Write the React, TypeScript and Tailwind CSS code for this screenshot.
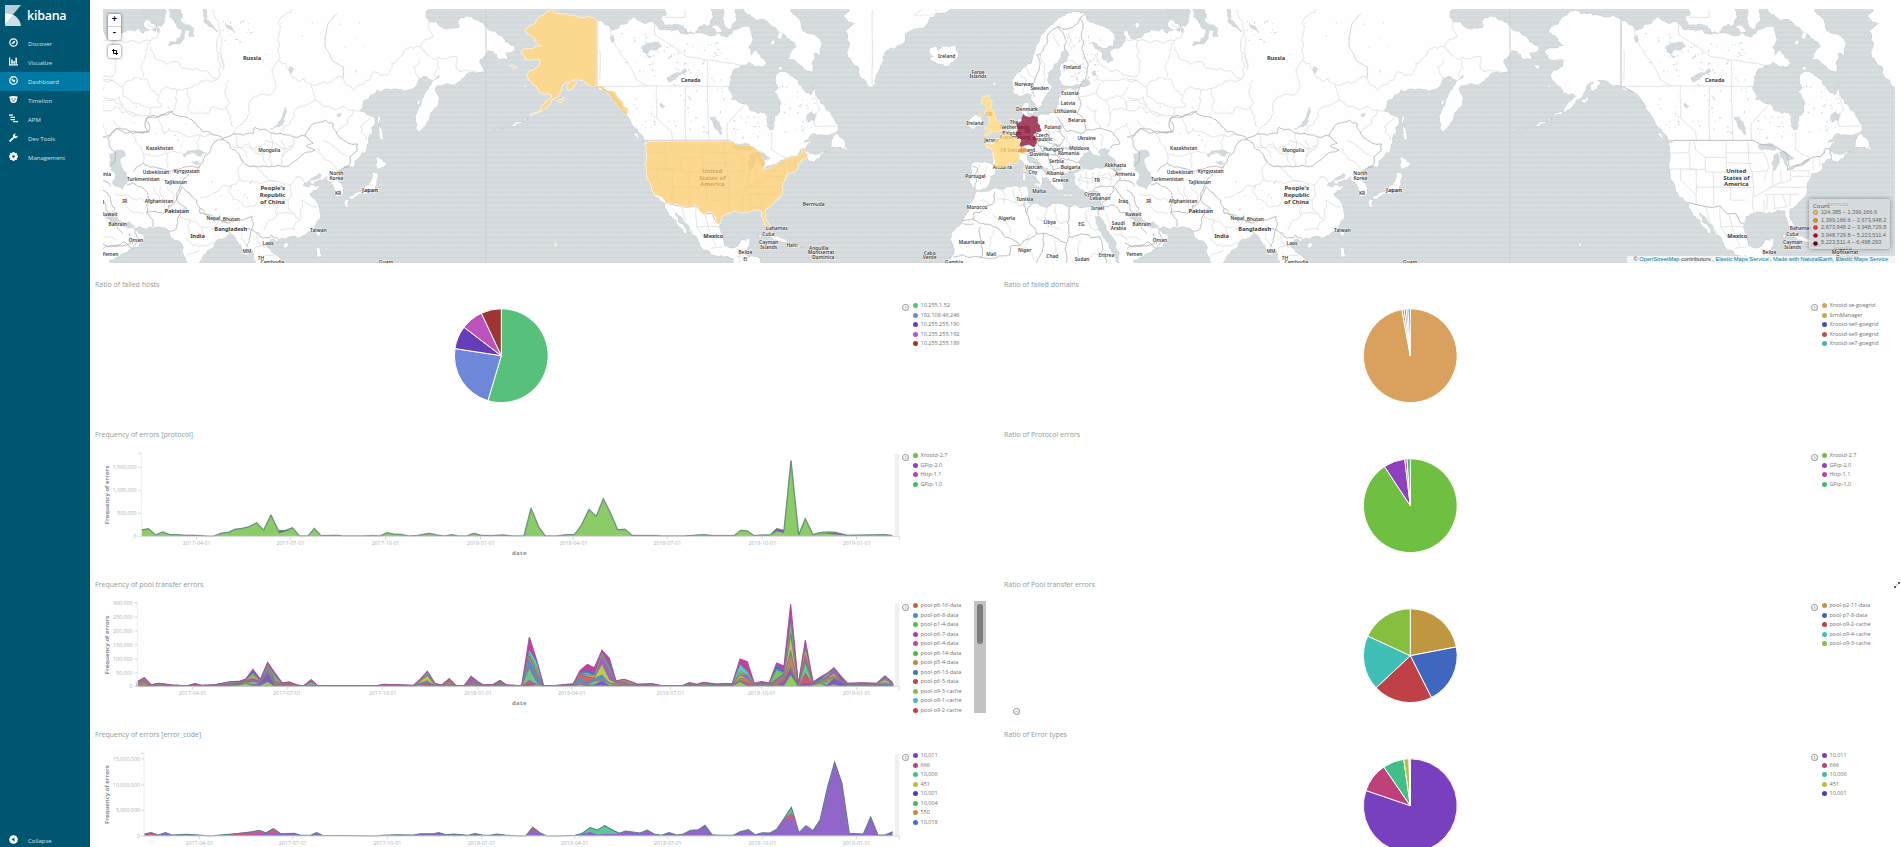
import React from "react";

type Pt = [number, number];

const parse = (s: string): Pt[] =>
  s.trim().split(/\s+/).map((p) => p.split(",").map(Number) as Pt);

const hash = (a: number, b: number) => {
  const v = Math.sin(a * 12.9898 + b * 78.233) * 43758.5453;
  return v - Math.floor(v);
};

// Midpoint displacement, symmetric in its end points so that shared borders coincide.
const split = (a: Pt, b: Pt, amp: number, depth: number): Pt[] => {
  const dx = b[0] - a[0];
  const dy = b[1] - a[1];
  const len = Math.hypot(dx, dy);
  if (depth === 0 || len < 5 || amp === 0) return [b];
  const sign = a[0] < b[0] || (a[0] === b[0] && a[1] < b[1]) ? 1 : -1;
  const k = (hash(a[0] + b[0], a[1] + b[1]) - 0.5) * 2 * amp * Math.min(len, 46) * sign;
  const m: Pt = [(a[0] + b[0]) / 2 - (dy / len) * k, (a[1] + b[1]) / 2 + (dx / len) * k];
  return [...split(a, m, amp, depth - 1), ...split(m, b, amp, depth - 1)];
};

const rough = (s: string, closed = true, amp = 0.2) => {
  const pts = parse(s);
  const out: Pt[] = [pts[0]];
  for (let i = 1; i < pts.length; i++) out.push(...split(pts[i - 1], pts[i], amp, 4));
  if (closed) out.push(...split(pts[pts.length - 1], pts[0], amp, 4));
  return "M" + out.map((p) => p[0].toFixed(1) + " " + p[1].toFixed(1)).join("L") + (closed ? "Z" : "");
};

/* ---------- geography: three sheets, each in its own triple-resolution grid ---------- */

const asiaLand = [
  "250,800 250,210 470,210 475,60 496,50 496,15 1280,15 1285,65 1310,65 1320,80 1378,82 1380,55 1425,60 1450,70 1485,95 1510,115 1525,130 1545,145 1535,155 1515,160 1522,178 1495,175 1480,155 1465,150 1455,165 1440,178 1452,213 1420,215 1385,235 1370,248 1315,255 1305,265 1315,290 1310,320 1290,345 1280,365 1260,395 1252,335 1265,300 1282,270 1316,235 1320,216 1294,240 1271,228 1253,246 1240,265 1215,275 1195,268 1130,270 1110,285 1080,330 1100,345 1120,350 1125,365 1115,400 1105,430 1075,475 1060,500 1040,497 1025,510 1010,520 1015,545 1027,560 1025,585 1010,590 1003,580 1002,560 995,545 980,540 985,525 965,540 945,545 940,552 930,550 935,540 965,525 960,520 945,528 930,540 915,548 905,555 925,562 940,555 960,560 950,570 930,580 940,595 955,615 960,640 950,665 935,690 915,705 890,712 860,715 840,715 830,725 820,715 805,725 800,740 820,760 838,775 850,800 775,800 760,775 757,750 740,765 725,760 725,735 710,715 690,700 670,715 645,725 620,755 605,775 595,800 565,800 555,770 548,735 535,720 515,715 510,700 505,692 480,680 455,682 420,680 402,683 405,690 430,705 430,720 415,740 385,750 350,770 309,788",
  "1135,350 1142,350 1145,390 1150,420 1142,418 1137,390 1133,365",
  "1132,470 1145,478 1160,490 1150,502 1135,508 1130,490",
  "1120,515 1132,520 1130,550 1118,570 1095,580 1070,588 1055,598 1045,592 1065,578 1090,570 1105,555 1115,540",
  "1035,598 1048,600 1044,622 1036,618",
  "955,690 960,695 955,708 948,700",
  "850,732 862,728 864,738 855,745",
  "950,742 962,745 965,768 950,770",
  "1250,310 1260,300 1260,330",
];
const euroLand = [
  "400,275 397,240 410,222 430,205 455,190 462,165 468,140 480,120 490,100 510,75 535,55 560,42 585,35 610,40 618,55 640,68 670,80 695,95 705,115 700,138 680,145 655,138 635,125 620,115 640,135 665,155 670,180 685,190 700,180 690,160 705,145 725,140 735,125 730,95 745,95 750,115 765,118 790,105 815,90 835,95 850,85 858,100 880,90 900,85 905,100 920,95 915,70 870,60 862,70 870,85 900,96 928,60 928,15 990,15 990,600 680,640 660,640 663,610 665,590 655,575 640,570 625,575 605,568 590,555 583,540 582,520 600,512 615,510 600,505 585,510 570,512 560,518 545,520 540,530 548,545 550,570 535,572 520,555 508,540 500,525 500,505 480,490 465,475 455,465 440,462 440,475 455,490 475,505 500,530 495,535 485,530 487,545 478,555 470,535 450,515 435,500 425,480 405,478 390,490 375,497 355,497 345,505 345,520 330,540 325,555 310,565 290,570 278,560 272,550 275,520 277,490 300,488 335,492 340,470 335,450 318,440 315,430 340,428 350,420 365,415 378,400 395,390 410,378 412,360 428,355 425,335 430,310 445,305 440,330 450,350 470,350 500,345 520,340 530,325 535,300 545,275 570,265 600,262 625,255 610,250 590,252 570,258 545,255 537,235 540,200 560,185 570,165 560,150 545,155 540,175 520,195 505,220 505,250 515,262 495,290 485,315 470,322 460,305 455,285 440,280 420,290",
  "290,575 320,575 350,565 400,560 440,560 445,575 438,600 455,612 485,620 500,625 520,610 545,612 570,620 610,625 645,620 660,635 700,630 760,800 200,800 215,770 212,715 225,690 250,660 265,625 280,600",
  "308,290 328,285 325,300 338,303 330,325 345,340 352,365 368,378 362,395 335,400 310,408 320,395 335,390 312,385 325,370 325,350 312,340 318,320 302,310",
  "272,356 290,345 303,350 300,375 280,386 266,376",
  "150,145 165,140 175,152 195,140 225,138 236,160 225,180 195,198 165,187 150,178 165,168 150,158",
  "462,555 483,552 480,566",
  "428,520 436,518 435,542 427,538",
  "430,500 436,498 437,514 431,514",
  "550,584 576,584 576,588 552,588",
  "618,586 635,581 632,590",
  "765,72 775,68 780,78 770,84",
  "340,250 348,246 344,260",
  "448,330 460,328 458,342 448,340",
  "510,300 514,292 514,306",
  "105,45 125,28 165,28 168,40 130,45",
];
const amerLand = [
  "340,75 360,50 375,38 395,30 430,42 470,48 495,52 515,52 531,64 555,75 575,92 600,75 625,65 640,52 650,60 690,65 725,90 755,95 775,90 800,105 830,100 870,110 895,100 905,110 925,110 945,90 970,80 990,85 998,115 985,140 992,180 975,195 950,205 930,230 925,265 935,300 960,310 985,320 1010,340 1035,340 1040,365 1050,390 1060,390 1065,350 1080,325 1080,300 1060,275 1075,260 1072,220 1100,218 1135,240 1145,260 1160,280 1175,285 1182,265 1190,290 1215,325 1235,350 1255,375 1255,390 1215,405 1180,400 1150,430 1175,425 1155,450 1185,465 1220,455 1200,475 1180,485 1165,480 1162,472 1135,490 1130,512 1105,520 1095,540 1085,560 1088,580 1065,605 1040,625 1035,640 1050,675 1045,685 1030,660 1025,635 1000,630 965,640 930,640 905,650 900,672 905,700 910,725 930,745 955,740 965,720 990,715 985,740 975,765 1000,770 1020,775 1020,800 950,800 940,775 905,765 870,755 840,735 830,710 810,690 790,660 770,640 758,620 770,650 785,672 800,695 795,700 778,680 755,650 735,610 705,588 695,560 680,530 675,490 678,440 672,430 690,423 660,400 640,380 625,350 605,320 575,285 560,272 531,258 505,255 480,240 465,240 455,245 435,250 425,270 415,290 395,300 385,320 355,335 330,345 365,320 385,300 395,290 385,280 360,280 350,260 325,240 320,225 330,210 355,200 360,180 340,178 315,178 303,157 325,145 345,140 365,138 345,125 330,105 315,95 320,82",
  "725,52 740,45 735,20 870,20 880,50 868,75 835,80 825,100 805,98 790,78 740,75 730,65",
  "875,80 895,75 905,92 890,98",
  "915,20 945,20 950,60 935,85 915,80 908,55",
  "970,20 1110,20 1140,65 1160,100 1205,130 1200,165 1182,160 1175,190 1178,215 1150,205 1125,180 1100,180 1112,160 1130,140 1080,95 1050,70 1010,60 980,40",
  "985,170 1005,150 1020,165 1040,190 1010,200 990,190",
  "1075,98 1088,100 1085,115 1072,112",
  "1055,122 1066,125 1062,135 1052,130",
  "1075,200 1088,200 1085,210 1075,208",
  "1235,430 1250,392 1258,412 1275,428 1282,450 1255,440 1230,440",
  "638,396 652,400 682,428 668,424",
  "1300,20 1440,20 1600,20 1545,45 1510,85 1455,100 1450,130 1400,150 1385,190 1365,240 1358,262 1340,250 1320,230 1300,190 1282,160 1290,130 1278,95 1305,70 1270,50",
  "1012,705 1050,700 1085,715 1105,728 1080,722 1050,708 1020,712",
  "1108,735 1130,732 1152,742 1120,745",
  "268,196 280,195 292,202 282,206",
  "412,302 430,290 432,298 420,308",
  "310,258 320,258 316,263",
  "205,388 230,383 228,386 208,391",
  "240,382 262,378 250,384",
  "275,376 300,366 325,358 305,368 280,378",
  "405,728 412,735 406,740",
  "440,256 460,240 470,248 455,268 442,272",
];
const asiaWater = [
  "510,15 540,15 548,45 540,60 560,75 583,85 582,112 566,108 568,90 556,90 552,115 540,132 508,138 505,132 530,125 543,108 546,92 530,80 520,60 508,50",
  "610,20 620,40 618,60 638,75 655,92 650,95 630,80 612,64",
  "330,462 350,450 372,452 376,468 358,478 364,500 380,520 382,548 370,566 350,560 338,545 345,520 330,495",
  "550,462 565,452 590,450 620,460 600,468 575,456 560,462 553,472",
  "810,388 830,376 848,350 855,322 858,340 852,365 838,380",
  "575,485 600,490 590,496",
  "318,640 332,640 355,658 378,668 388,665 405,680 380,682 360,676 340,665 325,655",
  "675,75 695,80 705,98 685,88",
  "868,200 880,205 872,222",
  "1010,345 1024,340 1020,350",
];
const euroWater = [
  "600,480 610,460 630,450 640,465 660,470 655,455 675,445 690,450 680,465 705,480 725,500 720,512 690,505 660,505 635,510 610,508 600,495",
  "645,650 655,648 672,670 692,705 708,735 718,760 725,800 710,800 700,760 680,725 665,700 652,675",
  "605,245 620,238 632,250 618,256",
  "636,215 646,212 648,225 640,228",
  "860,15 928,15 925,60 915,80 900,80 885,55 865,50",
];
const amerWater = [
  "665,140 680,130 715,125 725,140 710,150 690,150 680,165 695,170 685,172 672,158",
  "740,235 760,222 795,205 800,215 775,228 760,240 745,245",
  "870,350 885,350 895,365 905,385 905,405 895,390 885,385",
  "942,440 965,432 985,432 1005,446 990,450 965,446 950,450",
  "990,465 1002,460 1006,475 1000,500 988,512 984,490",
  "1005,455 1035,462 1050,475 1030,478 1030,500 1020,480 1008,470",
  "1030,508 1050,498 1075,490 1098,478 1090,488 1066,498",
  "1160,345 1175,335 1190,345 1185,362 1165,365",
  "570,112 580,105 585,120 575,128",
  "720,310 735,318 728,325",
];

const countryA = [
  "309,410 330,405 350,385 375,400 415,398 445,395 435,375 445,352 480,348 515,335 550,350 570,358 590,375 610,395 640,405 668,418 645,425 630,455 620,465 600,500 560,500 530,510 480,505 430,490 400,515",
  "668,418 700,402 730,405 760,400 765,382 800,390 830,402 880,410 915,408 940,430 920,440 945,450 915,458 880,485 850,500 800,500 745,498 720,470 690,440 668,418",
  "915,408 945,370 975,360 1000,370 1010,400 1040,425 1072,432 1070,455 1050,470 1045,500 1010,515",
  "600,500 560,530 540,560 570,580 590,600 600,625 640,650 680,668 720,660 755,648 760,670 755,690 790,715 815,705 835,715",
  "540,560 530,600 560,625 535,650 525,690 505,692",
  "380,555 400,550 440,575 445,600 440,640 460,660 460,680",
  "440,640 490,640 530,600 545,565",
  "600,625 600,640 650,662 680,668",
  "690,700 680,690 720,690 755,690 740,740",
  "370,725 400,745 415,725 405,690",
  "309,745 350,735 370,725",
  "309,570 330,590 345,625 330,640",
];
const provinceA = [
  "640,27 660,90 655,160 668,200", "655,160 650,240 600,245 560,265 530,270 500,260 475,285",
  "475,285 440,235 400,235 365,260 340,240 309,240", "309,120 450,122 480,95 470,80 440,70",
  "450,122 435,170 430,230", "450,140 465,175 530,185 560,205 590,205 625,215 650,240",
  "880,27 860,40 835,70 832,120 835,180 820,230 830,260 800,285 755,300 750,340 715,380 700,400",
  "685,240 675,270 680,320 690,345 700,380", "560,265 570,300 565,330 610,340 640,320 680,320",
  "530,270 525,320 515,335", "475,285 485,320 450,325 445,352", "365,260 370,290 400,310 450,325",
  "835,180 870,220 890,240 930,250", "930,250 945,300 900,320 870,370 835,400",
  "930,250 1030,230", "1030,230 1060,270 1080,255 1110,240 1125,215 1160,225 1175,190 1205,170 1220,145 1260,140",
  "945,300 975,320 1040,325 1060,330 1085,330", "1060,330 1045,370 1025,380 1010,400",
  "309,330 350,320 380,335 400,350 445,352", "309,290 340,300 365,330", "340,360 360,385",
  "480,348 490,400 545,400 590,405 640,405", "400,400 430,460 430,490", "430,460 500,460 560,462 620,465",
  "500,460 505,505", "600,405 590,450", "720,540 690,560 640,580 600,590", "720,470 715,520 720,540 770,545 830,545",
  "745,498 800,530 830,545 870,555 890,530 915,548", "870,555 865,600 880,640 900,660", "690,560 700,600 760,620 800,600 830,620 865,600",
  "830,620 815,660 790,690", "880,640 830,640", "900,660 880,690 840,690", "905,600 950,620", "905,600 900,660",
  "955,440 975,480 1010,500", "970,420 1040,470", "700,402 710,440 740,470", "785,440 790,480 800,500", "815,405 815,500", "845,420 845,495", "740,440 800,420 880,440",
  "540,650 570,660 600,680 640,690", "570,660 560,720 600,740 640,730", "560,770 600,750", "605,680 610,720", "660,640 640,690",
  "460,560 480,600 440,600", "480,560 490,620", "500,560 520,600 500,640", "510,520 560,510 600,515", "380,600 400,640 430,640", "345,580 400,600 440,600",
  "725,700 735,730 755,745", "770,700 790,740 815,740", "760,745 800,735", "775,760 830,765",
  "700,440 745,430 770,460 800,455", "880,410 870,450 845,470", "1110,350 1080,380 1100,420", "1260,240 1240,200 1260,180",
  "1260,140 1290,170 1310,175 1305,230", "1310,170 1370,170 1380,215 1440,222", "1285,65 1300,110 1260,140",
  "540,15 550,60", "665,110 670,210",
];
const riverA = ["1010,40 985,70 975,110 980,150 1000,185 1030,200 1030,230"];
const countryE = [
  "470,225 478,205 470,165 490,150 500,110 535,80 550,100 560,125 555,150",
  "535,80 555,88 580,80 600,55 612,45", "600,55 605,110 620,185 615,240 600,258", "465,290 462,260 470,225",
  "600,262 595,290 600,320 590,340 560,330 530,330", "590,340 610,355 620,390 600,400 560,395 545,370 530,350", "545,370 540,395 555,415 540,435 510,430 490,420",
  "620,390 660,385 700,400 720,430 690,445", "490,420 470,425 480,440 510,445 530,435 555,445 590,440 600,465", "530,435 525,465 505,465 490,455 480,440",
  "525,465 560,480 600,485", "505,465 510,490 520,510 560,505 600,500", "500,505 515,520 540,520",
  "445,460 470,455 490,455", "278,500 292,505 290,545 285,565", "335,492 365,500",
  "760,500 780,460 760,440 755,415 790,385 830,400 880,395 870,355 915,345 950,335",
  "640,570 660,560 700,560 720,540 750,545 765,560", "720,540 715,520 700,510 750,520", "700,560 690,590 665,620 655,645", "700,560 740,600 760,640",
  "665,620 700,615 745,645 800,700", "345,575 340,610 280,640 280,660", "280,660 340,680 420,735 470,700 440,640 430,600",
  "455,612 440,640", "568,620 568,710 660,710", "470,700 490,700 560,730 568,710", "280,655 245,660", "300,680 305,770 250,765 220,770", "250,672 280,672",
  "420,735 390,740 390,765 340,775 300,770", "490,700 490,740 470,790", "560,730 560,770 555,800", "660,710 665,760 680,790", "735,730 780,740 830,730 820,700",
];
const provinceE = [
  "480,160 495,230 490,270", "520,100 540,140", "570,90 575,150", "540,215 600,210", "570,180 610,190", "415,215 440,240 430,280", "440,200 465,240",
  "620,185 650,170 670,200 720,215 770,230", "770,230 780,180 775,120", "640,240 670,245 770,240", "600,290 650,280 680,300 690,340 740,330", "690,340 680,380",
  "650,280 660,250", "680,300 720,290 740,260", "740,330 750,300 790,290 800,320 850,350", "720,290 740,320", "700,400 740,370 755,415", "620,320 650,330 660,385",
  "640,420 650,450", "600,400 610,440", "660,400 665,440", "560,400 580,440", "500,360 505,420", "530,360 535,400", "495,390 545,390",
  "600,520 600,560", "620,515 625,570", "640,515 645,560", "660,515 665,560", "685,515 690,555", "590,540 700,540", "600,530 710,528",
  "300,495 305,555", "320,500 318,540", "335,530 300,525", "370,570 375,610", "400,565 405,610", "420,565 425,600", "300,600 330,620", "350,600 440,610",
  "500,625 505,680 540,690", "530,615 530,660 568,665", "470,650 500,660", "620,630 630,680 660,690", "450,700 430,760", "340,690 330,740", "390,700 370,660 340,640",
  "600,720 600,780 640,760 665,770", "520,720 530,760", "680,640 690,680 720,690 740,720", "700,700 780,720", "440,745 460,780",
  "520,450 540,470 580,460", "560,445 565,480", "520,480 560,490", "450,455 460,440",
];
const provinceU = [
  "710,259 710,355 755,395 758,421", "796,259 796,421", "862,180 862,260", "862,259 866,421", "922,421 922,370 975,312", "1055,395 1055,450 1085,468 1100,472",
  "540,259 925,259",
  "705,70 705,105 760,140 800,170 862,180", "735,52 796,52 796,30", "862,180 960,195", "568,75 575,115 600,160 625,190 650,240 680,258",
  "1255,380 1185,380 1175,350 1200,330 1185,290", "1357,30 1357,258",
  "678,460 735,458 738,422", "750,422 755,450 785,472 847,472", "785,470 785,516 847,516 847,425", "680,508 785,508", "710,508 710,540 757,585", "737,460 737,508 757,508 757,610",
  "757,562 860,562 930,562", "808,516 808,615", "847,458 912,458", "847,488 925,490", "910,425 915,490 925,520", "847,530 925,530", "925,520 930,562 925,600 930,640", "860,562 860,600 905,600",
  "912,458 960,458", "960,458 975,500 960,540", "925,515 965,512", "985,512 985,560 930,590", "1010,512 1012,545 985,560", "1040,510 1040,540 1010,550",
  "975,562 1085,562", "960,585 1065,582", "970,590 968,630", "990,585 992,630", "1015,582 1028,620 990,625", "1040,580 1035,620", "1045,512 1095,512 1095,530 1045,530",
  "1108,475 1108,510", "1125,470 1128,500", "1135,470 1140,450", "960,600 960,640", "540,240 540,150",
  "785,622 800,670 820,700", "828,620 830,680 850,710", "855,645 870,700 890,740", "830,680 900,680", "850,710 905,710", "870,745 910,740", "955,745 960,790", "975,765 950,770", "985,790 1015,790",
];
const countryU = ["531,64 531,258", "531,258 560,272 580,285 605,320", "688,421 922,421", "922,421 955,435 985,435 1010,450 1030,470 1030,510 1065,495 1100,475 1130,470 1145,445 1155,445 1162,472", "735,608 785,620 805,622 828,618 850,642 875,640 890,668 900,672"];

const usa =
  "690,423 920,423 955,435 985,435 1010,450 1030,470 1030,510 1065,495 1100,475 1130,470 1145,445 1155,445 1162,472 1135,490 1130,512 1105,520 1095,540 1085,560 1088,580 1065,605 1040,625 1035,640 1050,675 1045,685 1030,660 1025,635 1000,630 965,640 930,640 905,650 900,672 890,668 875,640 850,642 828,618 805,622 785,620 740,610 705,588 695,560 680,530 675,490 678,440 672,430";
const alaska =
  "340,75 360,50 375,38 395,30 430,42 470,48 495,52 515,52 531,64 531,256 505,255 480,240 465,240 455,245 435,250 425,270 415,290 395,300 385,320 355,335 330,345 365,320 385,300 395,290 385,280 360,280 350,260 325,240 320,225 330,210 355,200 360,180 340,178 315,178 303,157 325,145 345,140 365,138 345,125 330,105 315,95 320,82";

// Draws the outline with its long straight runs kept straight.
const outline = (s: string, straightBelow: number) => {
  const pts = parse(s);
  const out: Pt[] = [pts[0]];
  for (let i = 1; i <= pts.length; i++) {
    const a = pts[i - 1];
    const b = pts[i % pts.length];
    const long = Math.hypot(b[0] - a[0], b[1] - a[1]) > straightBelow;
    out.push(...split(a, b, long ? 0 : 0.2, 4));
  }
  return "M" + out.map((p) => p[0].toFixed(1) + " " + p[1].toFixed(1)).join("L") + "Z";
};

// text, x, y (centre, triple grid), size class
type Label = [string, number, number, number?];
const labelsA: Label[] = [
  ["Russia", 756, 174, 1], ["Kazakhstan", 479, 445], ["Mongolia", 808, 451], ["Uzbekistan", 468, 516], ["Kyrgyzstan", 560, 514], ["Turkmenistan", 430, 538],
  ["Tajikistan", 527, 548], ["Afghanistan", 477, 605], ["IR", 374, 604], ["Pakistan", 530, 632, 1], ["Nepal", 640, 654], ["Bhutan", 694, 659],
  ["Bangladesh", 692, 688, 1], ["India", 593, 708, 1], ["People's", 818, 565, 2], ["Republic", 818, 585, 2], ["of China", 818, 605, 2],
  ["North", 1009, 520], ["Korea", 1009, 535], ["KR", 1014, 580], ["Japan", 1110, 570, 1], ["Taiwan", 955, 692], ["Laos", 804, 729], ["MM", 741, 755],
  ["TH", 783, 774], ["Cambodia", 817, 787], ["Guam", 1158, 788],
];
const labelsE: Label[] = [
  ["Iceland", 200, 168], ["Faroe", 294, 216], ["Islands", 294, 230], ["Finland", 576, 202], ["Norway", 431, 252], ["Sweden", 479, 266], ["Estonia", 570, 281],
  ["Latvia", 564, 311], ["Lithuania", 556, 334], ["Denmark", 441, 329], ["Belarus", 591, 362], ["Poland", 517, 381], ["Ireland", 285, 371], ["GB", 326, 344],
  ["The", 402, 368], ["Netherlands", 404, 382], ["Belgium", 396, 401], ["Luxembourg", 406, 412], ["DE", 443, 395], ["Czech", 487, 406], ["Republic", 487, 419],
  ["Ukraine", 620, 416], ["Jersey", 334, 421], ["FR", 370, 451], ["Switzerland", 424, 450], ["Hungary", 520, 447], ["Moldova", 597, 445], ["Slovenia", 477, 463],
  ["Romania", 565, 461], ["Serbia", 529, 483], ["Bulgaria", 572, 501], ["Andorra", 367, 502], ["Vatican", 461, 503], ["City", 459, 517], ["Albania", 525, 520],
  ["Greece", 541, 542], ["Portugal", 286, 530], ["Malta", 477, 575], ["TR", 651, 541], ["Abkhazia", 706, 495], ["Armenia", 735, 522], ["Tunisia", 434, 597],
  ["Cyprus", 637, 584], ["Lebanon", 660, 596], ["Israel", 653, 626], ["Iraq", 730, 605], ["Morocco", 291, 623], ["Algeria", 380, 655], ["Libya", 509, 666],
  ["EG", 604, 672], ["Saudi", 715, 671], ["Arabia", 715, 685], ["Mauritania", 275, 727], ["Mali", 334, 762], ["Niger", 434, 750], ["Chad", 517, 769],
  ["Sudan", 606, 778], ["Eritrea", 679, 766], ["Cabo", 149, 759], ["Verde", 149, 772], ["Gambia", 222, 787],
  ["Bahrain", 785, 672], ["Oman", 840, 720], ["Yemen", 763, 762], ["Kuwait", 760, 642],
];
const labelsU: Label[] = [
  ["Canada", 812, 241, 3], ["United", 877, 513, 2], ["States of", 877, 533, 2], ["America", 877, 553, 2], ["Mexico", 880, 707, 1], ["Bermuda", 1181, 612],
  ["Bahamas", 1070, 685], ["Cuba", 1045, 702], ["Cayman", 1046, 727], ["Islands", 1046, 741], ["Haiti", 1116, 737], ["Belize", 976, 758], ["El", 976, 777],
  ["Anguilla", 1196, 746], ["Montserrat", 1203, 758], ["Dominica", 1210, 771],
];

const sheets = [
  { t: "translate(0 0) scale(.33333)", land: asiaLand, water: asiaWater, minor: provinceA, major: countryA, rivers: riverA, labels: labelsA },
  { t: "translate(-144 0) scale(.33333)", land: euroLand, water: euroWater, minor: provinceE, major: countryE, rivers: [], labels: labelsE },
  { t: "translate(420 0) scale(.33333)", land: amerLand, water: amerWater, minor: provinceU, major: countryU, rivers: [], labels: labelsU },
];

// Scattered small lakes: [sheet, x, y, width, height, count]
const lakeFields: [number, number, number, number, number, number][] = [
  [2, 740, 120, 180, 280, 75], [2, 600, 100, 180, 130, 32], [2, 1075, 250, 110, 150, 38], [2, 940, 340, 90, 80, 18], [2, 640, 290, 70, 100, 14],
  [1, 545, 110, 60, 30, 8], [1, 570, 200, 40, 45, 12], [1, 620, 110, 50, 20, 4], [1, 610, 150, 50, 90, 18], [0, 665, 60, 90, 70, 16], [0, 400, 320, 250, 120, 14], [0, 620, 540, 140, 90, 14], [0, 740, 40, 400, 200, 14],
];

const WorldSheet = () => (
  <g>
    {sheets.map((s, i) => (
      <g key={i} transform={s.t} fill="#fff" stroke="#bac2c6" strokeWidth="2.2" strokeLinejoin="round">
        {s.land.map((d, k) => <path key={k} d={rough(d)} />)}
      </g>
    ))}
    {sheets.map((s, i) => (
      <g key={i} transform={s.t} fill="#fefefe">
        {s.land.map((d, k) => <path key={k} d={rough(d)} />)}
      </g>
    ))}
    {sheets.map((s, i) => (
      <g key={i} transform={s.t} fill="none" strokeLinejoin="round">
        <g fill="#d3dadd" stroke="#c0c9cd" strokeWidth="1.2">
          {s.water.map((d, k) => <path key={k} d={rough(d)} />)}
        </g>
        <g fill="#c8d1d5">
          {lakeFields.filter((f) => f[0] === i).flatMap((f, n) =>
            Array.from({ length: f[5] }, (_, k) => {
              const x = f[1] + hash(k + 1, n + 3) * f[3];
              const y = f[2] + hash(n + 7, k + 2) * f[4];
              const r = 1.4 + hash(k, k) * 3.2;
              return <ellipse key={n + "-" + k} cx={x} cy={y} rx={r} ry={1.5} transform={`rotate(${hash(k, n) * 180 - 90} ${x} ${y})`} />;
            })
          )}
        </g>
        <g stroke="#c3cdd1" strokeWidth="2.6">
          {s.rivers.map((d, k) => <path key={k} d={rough(d, false, 0.08)} />)}
        </g>
        <g stroke="#d4d4d4" strokeWidth="2">
          {s.minor.map((d, k) => <path key={k} d={rough(d, false, i === 2 ? 0.03 : 0.22)} />)}
        </g>
        <g stroke="#a9abac" strokeWidth="2.4">
          {s.major.map((d, k) => <path key={k} d={i === 2 && k !== 3 ? rough(d, false, 0) : rough(d, false, 0.16)} />)}
        </g>
      </g>
    ))}
    {sheets.map((s, i) => (
      <g key={i} transform={s.t} textAnchor="middle" stroke="#fff" strokeOpacity=".7" paintOrder="stroke" fill="#3c3c3c">
        {s.labels.map(([t, x, y, big], k) => (
          <text key={k} x={x} y={y + (big ? 6 : 5)} fontSize={big === 2 ? 18 : big === 1 ? 17 : big === 3 ? 15.5 : 14.5} strokeWidth="3" className={big ? "font-bold" : "font-semibold"}>{t}</text>
        ))}
      </g>
    ))}
  </g>
);

const MapLegendRow = ({ color, children }: { color: string; children: string }) => (
  <div className="flex h-[7.6px] items-center gap-[3px]">
    <svg className="size-[5px]" viewBox="0 0 10 10"><circle cx="5" cy="5" r="4.2" fill={color} stroke="#000" strokeOpacity=".45" strokeWidth="1.2" /></svg>
    <span className="whitespace-nowrap font-['Liberation_Sans'] text-[5.6px] leading-none text-[#666]">{children}</span>
  </div>
);

const WorldMap = () => (
  <section className="relative ml-[13px] mt-[9px] h-[254px] w-[1792px] shrink-0 overflow-hidden bg-[#d5dbde]">
    <svg className="block h-full w-full font-['Noto_Sans',sans-serif]" viewBox="103 9 1792 254">
      <defs>
        <pattern id="waves" width="6" height="5" patternUnits="userSpaceOnUse">
          <rect width="6" height="5" fill="#d7dcdf" />
          <path d="M0 2.5Q1.5 1.5 3 2.5T6 2.5" stroke="#cdd4d8" strokeWidth=".9" fill="none" />
        </pattern>
        <g id="world"><WorldSheet /></g>
      </defs>
      <rect x="103" y="9" width="1792" height="254" fill="url(#waves)" />
      <use href="#world" />
      <use href="#world" x="1024" />
      <path d="M486 9V263M1510 9V263" stroke="#c9cfd3" strokeWidth="1" />
      <g transform="translate(420 0) scale(.33333)" fill="#fbcb6c" fillOpacity=".76" stroke="#fff" strokeWidth="2.5" strokeOpacity=".8">
        <path d={outline(usa, 100)} />
        <path d={outline(alaska, 100)} />
        <path d={rough("531,256 545,258 560,272 575,272 592,290 606,305 624,325 625,342 605,338 590,315 575,298 565,278")} strokeDasharray="5 4" />
        <path d={rough("440,256 460,240 470,248 455,268 442,272")} />
        <path d={rough("412,302 430,290 432,298 420,308")} />
        <path d={rough("268,196 280,195 292,202 282,206")} />
        <path d="M404 728l8 7l-6 5z" />
      </g>
      <g transform="translate(880 0) scale(.33333)" fill="#fcd576" fillOpacity=".78" stroke="#fff" strokeWidth="2" strokeOpacity=".6">
        <path d={rough(euroLand[2])} />
        <path d={rough("290,345 300,338 306,350 292,352")} />
        <path d={rough("315,430 340,430 345,420 365,415 375,398 392,408 425,422 420,440 412,455 420,470 415,488 395,488 380,502 345,498 342,470 335,448 318,440")} />
        <path d={rough("430,500 436,498 437,514 431,514")} />
        <path d={rough("415,448 425,440 442,448 440,456 425,460 414,460")} fill="#fb9b32" />
        <path d={rough("430,342 438,350 460,348 472,350 476,372 484,392 460,405 470,425 462,440 420,438 424,420 408,408 410,372 425,362")} fill="#8d0f38" stroke="#8d0f38" strokeOpacity=".5" />
      </g>
    </svg>

    <div className="absolute left-[5px] top-[5px] flex w-[13px] flex-col divide-y divide-[#ccc] rounded-[2px] bg-white text-center font-['Liberation_Mono'] text-[9px] font-bold leading-[13px] text-black shadow-[0_0_3px_rgba(0,0,0,.65)]">
      <span className="h-[13px]">+</span>
      <span className="h-[13px]">-</span>
    </div>
    <div className="absolute left-[5px] top-[36px] flex size-[13px] items-center justify-center rounded-[2px] bg-white shadow-[0_0_3px_rgba(0,0,0,.65)]">
      <svg className="size-[6px]" viewBox="0 0 12 12" fill="none" stroke="#000" strokeWidth="2"><path d="M3 0V9H12M0 3H9V12" /></svg>
    </div>

    <div className="absolute bottom-0 right-0 flex h-[7px] w-[268px] items-center justify-center whitespace-pre bg-white/70 font-['Liberation_Sans'] text-[5.7px] leading-none text-[#333]">
      © <span className="text-[#0078a8]">OpenStreetMap</span> contributors , <span className="text-[#0078a8]">Elastic Maps Service</span> , <span className="text-[#0078a8]">Made with NaturalEarth</span>, <span className="text-[#0078a8]">Elastic Maps Service</span>
    </div>

    <div className="absolute right-[5px] top-[190px] h-[50px] w-[81px] rounded-[2px] bg-[#d5dbde]/75 py-[4px] pl-[4px] shadow-[0_0_4px_rgba(0,0,0,.4)]">
      <div className="h-[6px] font-['Open_Sans'] text-[6px] leading-[6px] text-[#555]">Count</div>
      <MapLegendRow color="#fcc34a">124,385 – 1,399,166.6</MapLegendRow>
      <MapLegendRow color="#fd8d1c">1,399,166.6 – 2,673,948.2</MapLegendRow>
      <MapLegendRow color="#f03b20">2,673,948.2 – 3,948,729.8</MapLegendRow>
      <MapLegendRow color="#c5001f">3,948,729.8 – 5,223,511.4</MapLegendRow>
      <MapLegendRow color="#6b0018">5,223,511.4 – 6,498,293</MapLegendRow>
    </div>
  </section>
);

/* ---------- panels ---------- */

type Item = [string, string];

const Chevron = ({ up = false }: { up?: boolean }) => (
  <svg className="size-[7px] shrink-0" viewBox="0 0 14 14">
    <circle cx="7" cy="7" r="5.9" fill="#fff" stroke="#a6a6a6" strokeWidth="2.2" />
    <path d={up ? "M4.4 8.6L7 5.8L9.6 8.6" : "M5.8 4.4L8.6 7L5.8 9.6"} fill="none" stroke="#999" strokeWidth="1.8" />
  </svg>
);

const Legend = ({ items, scroll }: { items: Item[]; scroll?: boolean }) => (
  <div className="flex h-[121px] gap-[4px] pt-[9px]">
    <div className="pt-[3px]"><Chevron /></div>
    <ul className={scroll ? "h-[114px] w-[61px]" : "w-[70px]"}>
      {items.map(([name, color]) => (
        <li key={name} className="flex h-[9.5px] items-center gap-[2.5px] whitespace-nowrap text-[5.5px] leading-[9.5px] text-[#707070]">
          <svg className="size-[5px] shrink-0" viewBox="0 0 10 10"><circle cx="5" cy="5" r="5" fill={color} /></svg>
          {name}
        </li>
      ))}
    </ul>
    {scroll && (
      <div className="-ml-[4px] h-[112px] w-[12px] bg-[#c1c2c2] pl-[3px] pt-[3px]">
        <div className="h-[40px] w-[6px] rounded-full bg-[#7b7d7e]" />
      </div>
    )}
  </div>
);

const Panel = ({ title, items, scroll, expand, foot, children }: { title: string; items: Item[]; scroll?: boolean; expand?: boolean; foot?: boolean; children: React.ReactNode }) => (
  <section className="relative h-[150px] w-[904px] shrink-0">
    <h2 className="h-[14px] text-[7px] leading-[14px] text-[#8b9a9c]">{title}</h2>
    <div className="flex gap-[2px]">
      {children}
      <Legend items={items} scroll={scroll} />
    </div>
    {expand && (
      <svg className="absolute right-[8px] top-[4px] size-[6px]" viewBox="0 0 12 12" stroke="#333" strokeWidth="1.6" fill="none"><path d="M7 5L11 1M8 1H11V4M5 7L1 11M1 8V11H4" /></svg>
    )}
    {foot && <div className="absolute left-[9px] top-[130px] flex"><Chevron up /></div>}
  </section>
);

const Pie = ({ slices }: { slices: [number, string][] }) => {
  const r = 46.9;
  const at = (deg: number) => {
    const a = (deg * Math.PI) / 180;
    return `${(406.3 + r * Math.sin(a)).toFixed(2)} ${(63.7 - r * Math.cos(a)).toFixed(2)}`;
  };
  return (
    <svg className="h-[121px] w-[805px] shrink-0" viewBox="0 0 805 121">
      {slices.map(([end, color], i) => {
        const start = i ? slices[i - 1][0] : 0;
        return <path key={i} d={`M406.3 63.7L${at(start)}A${r} ${r} 0 ${end - start > 180 ? 1 : 0} 1 ${at(end)}Z`} fill={color} stroke="#fff" strokeWidth="1" />;
      })}
    </svg>
  );
};

type Axis = { x0: number; top: number; base: number; yTicks: [number, string][]; xTicks: [number, string][]; labelRight: number; bars: [number, number] };

const dates = ["2017-04-01", "2017-07-01", "2017-10-01", "2018-01-01", "2018-04-01", "2018-07-01", "2018-10-01", "2019-01-01"];
const xt = (...xs: number[]): [number, string][] => xs.map((x, i) => [x, dates[i]]);

// Charts are plotted in a triple-resolution grid whose row origin is `oy`.
const AreaChart = ({ axis, oy, children }: { axis: Axis; oy: number; children: React.ReactNode }) => (
  <svg className="h-[136px] w-[805px] shrink-0" viewBox="95 292 805 136">
    <g transform={`translate(80 ${oy}) scale(.33333)`}>
      <rect x={axis.bars[0]} y={axis.top + 2} width={axis.bars[1] - axis.bars[0]} height={axis.base - axis.top - 2} fill="#f0f0f0" />
      {children}
      <g stroke="#d5d8da" strokeWidth="3" fill="none">
        <path d={`M${axis.x0} ${axis.base + 1}H${axis.bars[1]}v11`} />
        <path d={`M${axis.x0} ${axis.top}V${axis.base}`} stroke="#eceeef" />
        <path d={`M${axis.x0 - 9} ${axis.top}h9`} />
        {axis.yTicks.map(([y]) => <path key={y} d={`M${axis.x0 - 9} ${y}h9`} />)}
        {axis.xTicks.map(([x]) => <path key={x} d={`M${x} ${axis.base}v11`} />)}
      </g>
      <g fontSize="16" fill="#abb3b9">
        {axis.yTicks.map(([y, t]) => <text key={t} x={axis.labelRight} y={y + 6} textAnchor="end">{t}</text>)}
        {axis.xTicks.map(([x, t]) => <text key={t} x={x} y={axis.base + 27} textAnchor="middle">{t}</text>)}
      </g>
      <g fontSize="18" fill="#848e96" className="font-bold" textAnchor="middle">
        <text x="1318" y={axis.base + 57} letterSpacing="1">date</text>
        <text transform={`translate(88 ${axis.base - 123}) rotate(-90)`}>Frequency of errors</text>
      </g>
    </g>
  </svg>
);

const line = (pts: Pt[]) => "M" + pts.map((p) => p.join(" ")).join("L");
const area = (pts: Pt[], base: number) => `${line(pts)}L${pts[pts.length - 1][0]} ${base}L${pts[0][0]} ${base}Z`;

const protocolData = parse(
  "184,780 206,776 227,795 248,786 270,794 295,794 313,796 345,796 390,799 403,798 422,790 445,787 465,778 487,775 508,770 530,758 551,780 573,735 595,782 617,781 638,773 658,798 684,798 703,775 723,797 770,796 790,798 850,798 880,797 900,798 921,788 943,793 963,793 985,798 1010,797 1048,790 1070,795 1095,798 1115,794 1135,798 1160,798 1181,790 1203,796 1235,797 1268,795 1300,798 1332,798 1353,715 1376,770 1396,798 1430,798 1460,794 1483,794 1505,764 1527,718 1549,739 1570,686 1592,730 1613,779 1636,778 1656,796 1735,797 1745,798 1810,798 1872,794 1900,797 1962,797 1982,781 2003,783 2022,797 2048,795 2070,795 2090,776 2112,781 2133,572 2156,795 2176,746 2199,794 2218,788 2240,786 2265,787 2303,796 2415,794 2437,797"
);
const poolData = parse(
  "172,365 193,353 213,374 237,370 275,375 322,377 345,371 365,376 402,374 450,365 480,363 497,357 519,328 541,358 563,307 584,338 606,368 628,366 650,374 670,378 694,359 712,376 777,378 835,378 885,378 910,373 950,374 1000,376 1020,358 1042,334 1065,370 1085,375 1108,356 1127,376 1153,377 1173,349 1195,366 1210,375 1240,373 1260,361 1280,375 1325,377 1348,231 1370,300 1391,378 1417,377 1440,375 1480,371 1500,332 1522,313 1543,323 1566,271 1588,295 1608,362 1632,358 1655,365 1672,373 1716,371 1740,376 1780,378 1805,378 1828,368 1850,373 1870,367 1910,372 1957,370 1980,297 2002,305 2023,370 2045,365 2068,368 2090,309 2112,318 2132,132 2155,372 2176,240 2199,366 2220,352 2241,340 2262,323 2284,350 2303,370 2347,368 2390,370 2415,348 2438,368"
);
const errorData = parse(
  "192,822 213,818 235,825 257,818 275,825 320,823 345,824 392,828 412,826 465,821 515,816 537,811 558,818 580,806 602,821 643,820 662,826 692,826 710,818 727,826 890,828 908,826 950,824 1000,825 1020,821 1060,821 1076,818 1098,824 1120,822 1165,826 1185,821 1210,826 1230,826 1250,822 1275,825 1315,828 1338,827 1358,802 1380,818 1400,828 1445,828 1485,826 1508,820 1530,803 1552,810 1574,797 1596,809 1617,820 1637,813 1680,819 1702,810 1722,822 1745,826 1767,818 1790,825 1810,822 1832,811 1855,809 1875,796 1896,824 1920,826 1960,826 1980,815 2005,809 2025,824 2047,818 2070,819 2090,808 2112,776 2134,742 2157,818 2178,797 2199,812 2220,780 2243,680 2264,606 2286,670 2308,820 2350,822 2372,771 2394,825 2415,825 2438,815"
);

const ProtocolChart = () => (
  <AreaChart oy={120} axis={{ x0: 184, top: 550, base: 798, labelRight: 170, bars: [2445, 2458], yTicks: [[592, "1,500,000"], [661, "1,000,000"], [730, "500,000"], [799, "0"]], xTicks: xt(350, 631, 917, 1202, 1480, 1762, 2047, 2330) }}>
    <path d={area(protocolData, 798)} fill="#8ccc66" />
    <path d="M584 765L598 790L632 779L617 781L595 782ZM2072 796L2090 784L2112 789L2112 781L2090 776ZM2205 794L2240 791L2300 796L2265 787Z" fill="#9a4cc0" />
    <path d={line(protocolData)} fill="none" stroke="#9b59b0" strokeWidth="5" strokeOpacity=".35" />
    <path d={line(protocolData)} fill="none" stroke="#55996c" strokeWidth="3" />
  </AreaChart>
);

const poolColors = ["#c43f9f", "#4f6fd0", "#5cc9c4", "#6ecb5e", "#d9a94f", "#a65cd0", "#e0605f", "#b6cc55", "#5b8bd0", "#c98354", "#68c98e", "#d0566b", "#7a5ccc", "#8fcf55"];
const poolLayers = (() => {
  const n = 14;
  const weights = poolData.map((_, i) => {
    const w = Array.from({ length: n }, (_, k) => Math.pow(hash(i * 1.7 + k * 5.1, i + k * 3), 4) + 0.02);
    const sum = w.reduce((a, b) => a + b, 0);
    return w.map((v) => v / sum);
  });
  return Array.from({ length: n }, (_, k) =>
    poolData.map(([x, y], i): Pt => {
      const above = weights[i].slice(k).reduce((a, b) => a + b, 0);
      return [x, Math.round((379 - (379 - y) * above) * 10) / 10];
    })
  );
})();

const PoolChart = () => (
  <AreaChart oy={260} axis={{ x0: 172, top: 129, base: 378, labelRight: 158, bars: [2445, 2458], yTicks: [[129, "300,000"], [171, "250,000"], [213, "200,000"], [255, "150,000"], [297, "100,000"], [339, "50,000"], [379, "0"]], xTicks: xt(338, 621, 908, 1194, 1475, 1771, 2045, 2330) }}>
    {poolLayers.map((pts, k) => (
      <path key={k} d={area(pts, 379)} fill={poolColors[k]} stroke={k ? "#77758a" : "none"} strokeWidth="1.8" strokeOpacity=".8" />
    ))}
    <path d={line(poolData)} fill="none" stroke="#a950a0" strokeWidth="3.2" />
  </AreaChart>
);

const ErrorChart = () => (
  <AreaChart oy={110} axis={{ x0: 192, top: 580, base: 827, labelRight: 180, bars: [2445, 2458], yTicks: [[597, "15,000,000"], [675, "10,000,000"], [751, "5,000,000"], [828, "0"]], xTicks: xt(358, 638, 922, 1205, 1484, 1763, 2047, 2330) }}>
    <path d={area(errorData, 828)} fill="#9166cb" />
    <path d="M192 826L213 818L235 826ZM412 827L537 811L558 818L580 806L602 821L580 818L537 822L465 827ZM1338 828L1358 802L1378 818L1358 812ZM2090 808L2134 752L2150 800L2134 776L2112 778Z" fill="#d2588c" />
    <path d="M1490 827L1530 803L1552 810L1574 797L1596 809L1625 822L1574 821L1552 824L1530 815ZM2112 776L2134 742L2148 780L2134 758Z" fill="#5ac996" />
    <path d={line(errorData)} fill="none" stroke="#5a7f8b" strokeWidth="3.2" />
  </AreaChart>
);

/* ---------- sidebar ---------- */

const navItems: [string, React.ReactNode][] = [
  ["Discover", <><circle cx="9" cy="9" r="7.4" fill="none" stroke="#fff" strokeWidth="2.4" /><path d="M13 5L10.6 10.6L5 13L7.4 7.4Z" fill="#fff" /></>],
  ["Visualize", <path d="M0 1h2.4v13.6H18V17H0zM4.4 5h3v8.4h-3zM8.6 8h3v5.4h-3zM12.8 1.6h3v11.8h-3z" fill="#fff" />],
  ["Dashboard", <><circle cx="9" cy="9" r="7.6" fill="none" stroke="#fff" strokeWidth="2.4" /><path d="M4.5 7.6L7 4.5L9.6 9L12.6 7L11.2 12.6L8 11Z" fill="#fff" /></>],
  ["Timelion", <><path d="M1 3Q9 1 17 3Q18 5 16 8Q16 16 9 16Q2 16 2 8Q0 5 1 3Z" fill="#fff" /><circle cx="6" cy="8" r="1.3" fill="#005571" /><circle cx="12" cy="8" r="1.3" fill="#005571" /><path d="M7 11h4v2H7z" fill="#005571" /></>],
  ["APM", <path d="M-1 1h9v2.6h-9zM3 5.4h9V8H3zM3 9.8h9v2.6H3zM8 14h10v2.6H8z" fill="#fff" />],
  ["Dev Tools", <path d="M1 14.2L8.4 7.8A4.8 4.8 0 0 1 13.6 1L11.6 4.4L14 6.8L17.4 4.8A4.8 4.8 0 0 1 10.6 10L4 17A2 2 0 0 1 1 14.2Z" fill="#fff" />],
  ["Management", <><circle cx="9" cy="9" r="5" fill="none" stroke="#fff" strokeWidth="4.6" /><path d="M9 0v3M9 15v3M0 9h3M15 9h3M2.6 2.6l2.2 2.2M13.2 13.2l2.2 2.2M2.6 15.4l2.2-2.2M13.2 4.8l2.2-2.2" stroke="#fff" strokeWidth="3.6" /></>],
];

const NavRow = ({ label, icon, active }: { label: string; icon: React.ReactNode; active?: boolean }) => (
  <div className={active ? "flex h-[19px] shrink-0 items-center bg-[#0079a5] pl-[9px]" : "flex h-[19px] shrink-0 items-center pl-[9px]"}>
    <svg className="mb-[2px] size-[9px]" viewBox="0 0 18 18">{icon}</svg>
    <span className="ml-[10px] text-[6px] leading-none text-[#d5e3e8]">{label}</span>
  </div>
);

const Sidebar = () => (
  <aside className="flex h-[847px] w-[90px] shrink-0 flex-col bg-[#005571]">
    <div className="flex h-[34px] items-start pl-[5px] pt-[5px]">
      <svg className="h-[21px] w-[16px]" viewBox="0 0 16 21">
        <path d="M0 0H16L0 19Z" fill="#b9cfd8" />
        <path d="M0 8.5A14 14 0 0 1 8.5 10.3L0 20Z" fill="#fff" />
        <path d="M8.5 9.8C13 12.5 15.6 16.5 16 21H0V20Z" fill="#cfdee4" />
      </svg>
      <span className="ml-[6px] mt-[1px] text-[12.5px] font-semibold leading-[19px] tracking-[-0.02em] text-white">kibana</span>
    </div>
    <nav className="pt-[0px]">
      {navItems.map(([label, icon]) => <NavRow key={label} label={label} icon={icon} active={label === "Dashboard"} />)}
    </nav>
    <div className="mt-auto h-[16px]">
      <NavRow label="Collapse" icon={<><circle cx="9" cy="9" r="8.6" fill="#fff" /><path d="M5 9L11 5V13Z" fill="#005571" /></>} />
    </div>
  </aside>
);

const failedHosts: Item[] = [["10.255.1.52", "#57c17b"], ["192.108.46.248", "#6f87d8"], ["10.255.255.190", "#663db8"], ["10.255.255.192", "#bc52bc"], ["10.255.255.189", "#9e3533"]];
const failedDomains: Item[] = [["Xrootd-se-goegrid", "#daa05d"], ["SrmManager", "#bfaf40"], ["Xrootd-se6-goegrid", "#4050bf"], ["Xrootd-se9-goegrid", "#bf4f40"], ["Xrootd-se7-goegrid", "#40afbf"]];
const protocols: Item[] = [["Xrootd-2.7", "#6fbf40"], ["GFtp-2.0", "#8f40bf"], ["Http-1.1", "#bf40a0"], ["GFtp-1.0", "#40bf60"]];
const pools: Item[] = [["pool-p6-16-data", "#bf6a40"], ["pool-p6-8-data", "#409abf"], ["pool-p1-4-data", "#54bf40"], ["pool-p6-7-data", "#a640bf"], ["pool-p6-4-data", "#bf40b2"], ["pool-p6-14-data", "#40bf4e"], ["pool-p5-4-data", "#bf8a40"], ["pool-p6-13-data", "#4072bf"], ["pool-p6-5-data", "#bf4056"], ["pool-o9-3-cache", "#86bf40"], ["pool-o9-1-cache", "#40bfaa"], ["pool-o9-2-cache", "#bf4046"]];
const poolRatio: Item[] = [["pool-p2-11-data", "#bf9740"], ["pool-p7-8-data", "#4067bf"], ["pool-o9-2-cache", "#bf4046"], ["pool-o9-4-cache", "#40bfb7"], ["pool-o9-3-cache", "#86bf40"]];
const codes: Item[] = [["10,011", "#783fbf"], ["666", "#bf407a"], ["10,006", "#40bf87"], ["451", "#b7bf40"], ["10,001", "#4840bf"], ["10,004", "#40bf55"], ["550", "#bf9040"], ["10,018", "#4070bf"]];

export default function App() {
  return (
    <div className="flex h-[847px] w-[1901px] overflow-hidden bg-white font-['Open_Sans',sans-serif]">
      <Sidebar />
      <main className="flex min-w-0 flex-1 flex-col">
        <WorldMap />
        <div className="ml-[5px] mt-[15px] grid shrink-0 grid-cols-[904px_904px] gap-x-[5px]">
          <Panel title="Ratio of failed hosts" items={failedHosts}>
            <Pie slices={[[196.6, "#57c17b"], [278.7, "#6f87d8"], [307.3, "#663db8"], [334.9, "#bc52bc"], [360, "#9e3533"]]} />
          </Panel>
          <Panel title="Ratio of failed domains" items={failedDomains}>
            <Pie slices={[[349.6, "#daa05d"], [352.6, "#bfaf40"], [355, "#6a76cc"], [357.2, "#cf8076"], [360, "#40afbf"]]} />
          </Panel>
          <Panel title="Frequency of errors [protocol]" items={protocols}><ProtocolChart /></Panel>
          <Panel title="Ratio of Protocol errors" items={protocols}>
            <Pie slices={[[326.6, "#6fbf40"], [353.2, "#8f40bf"], [356, "#bf40a0"], [360, "#40bf60"]]} />
          </Panel>
          <Panel title="Frequency of pool transfer errors" items={pools} scroll><PoolChart /></Panel>
          <Panel title="Ratio of Pool transfer errors" items={poolRatio} expand foot>
            <Pie slices={[[79.2, "#bf9740"], [153.2, "#4067bf"], [226.8, "#bf4046"], [294.8, "#40bfb7"], [360, "#86bf40"]]} />
          </Panel>
          <Panel title="Frequency of errors [error_code]" items={codes}><ErrorChart /></Panel>
          <Panel title="Ratio of Error types" items={codes.slice(0, 5)}>
            <Pie slices={[[288.9, "#783fbf"], [325.6, "#bf407a"], [352, "#40bf87"], [358.4, "#b7bf40"], [360, "#cfcdf0"]]} />
          </Panel>
        </div>
      </main>
    </div>
  );
}
